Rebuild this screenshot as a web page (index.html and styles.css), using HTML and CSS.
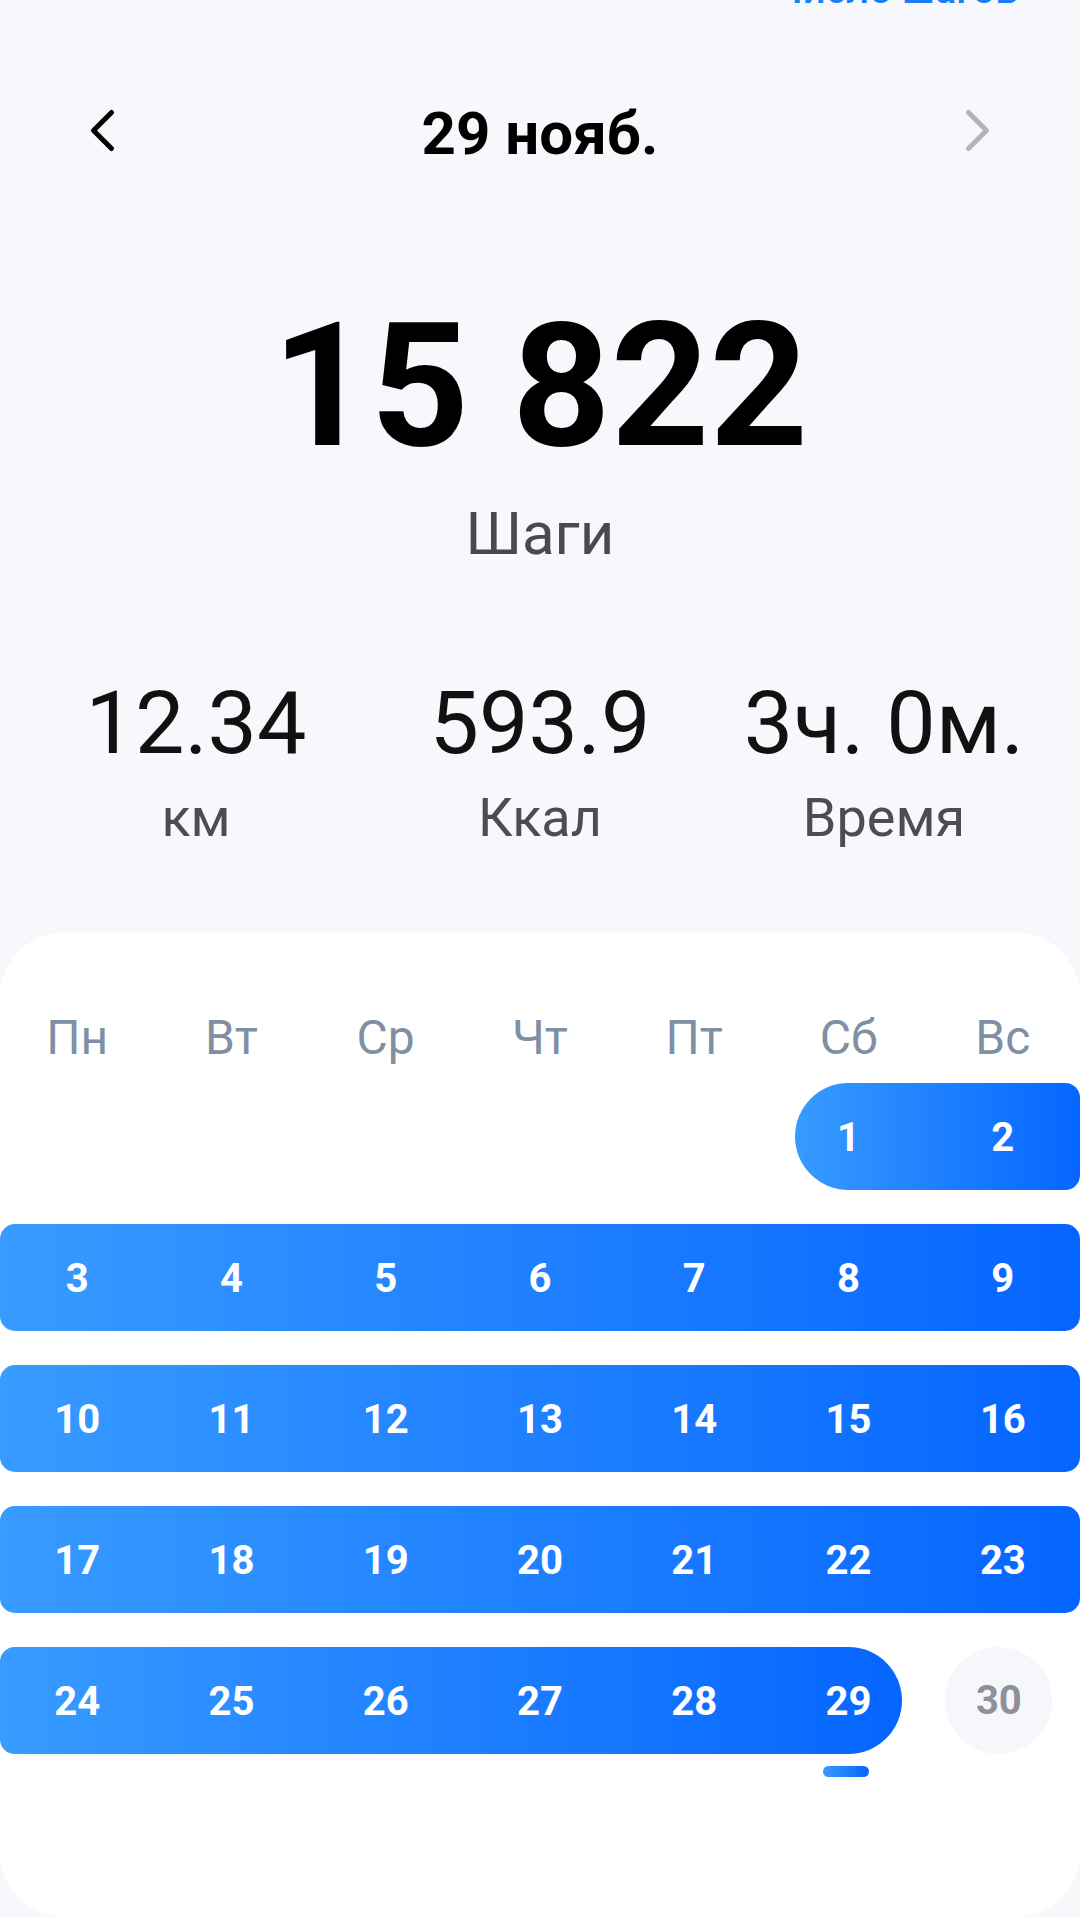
FILE: index.html
```html
<!DOCTYPE html>
<html lang="ru">
<head>
    <meta charset="UTF-8">
    <meta name="viewport" content="width=device-width, initial-scale=1.0">
    <title>Шаги</title>
    <link rel="stylesheet" href="styles.css">
</head>
<body>
    <div class="top-link"><span>Число шагов</span></div>

    <div class="date-nav">
        <svg class="nav-arrow" viewBox="0 0 32 50" width="32" height="50">
            <path d="M25.5 6.5 L7.5 24.5 L25.5 42.5" fill="none" stroke="#000" stroke-width="5" stroke-linecap="round" stroke-linejoin="round"/>
        </svg>
        <div class="date-title">29 нояб.</div>
        <svg class="nav-arrow" viewBox="0 0 32 50" width="32" height="50">
            <path d="M6.5 6.5 L24.5 24.5 L6.5 42.5" fill="none" stroke="#b3b3b8" stroke-width="5" stroke-linecap="round" stroke-linejoin="round"/>
        </svg>
    </div>

    <div class="steps-total">15 822</div>
    <div class="steps-label">Шаги</div>

    <div class="stats">
        <div class="stat">
            <div class="stat-value">12.34</div>
            <div class="stat-label">км</div>
        </div>
        <div class="stat">
            <div class="stat-value">593.9</div>
            <div class="stat-label">Ккал</div>
        </div>
        <div class="stat">
            <div class="stat-value">3ч. 0м.</div>
            <div class="stat-label">Время</div>
        </div>
    </div>

    <div class="calendar">
        <div class="weekdays">
            <div>Пн</div><div>Вт</div><div>Ср</div><div>Чт</div><div>Пт</div><div>Сб</div><div>Вс</div>
        </div>

        <div class="weeks">
            <div class="week">
                <div class="day"></div><div class="day"></div><div class="day"></div><div class="day"></div><div class="day"></div>
                <div class="range round-start">
                    <div class="day">1</div><div class="day">2</div>
                </div>
            </div>
            <div class="week">
                <div class="range">
                    <div class="day">3</div><div class="day">4</div><div class="day">5</div><div class="day">6</div><div class="day">7</div><div class="day">8</div><div class="day">9</div>
                </div>
            </div>
            <div class="week">
                <div class="range">
                    <div class="day">10</div><div class="day">11</div><div class="day">12</div><div class="day">13</div><div class="day">14</div><div class="day">15</div><div class="day">16</div>
                </div>
            </div>
            <div class="week">
                <div class="range">
                    <div class="day">17</div><div class="day">18</div><div class="day">19</div><div class="day">20</div><div class="day">21</div><div class="day">22</div><div class="day">23</div>
                </div>
            </div>
            <div class="week">
                <div class="range round-end">
                    <div class="day">24</div><div class="day">25</div><div class="day">26</div><div class="day">27</div><div class="day">28</div><div class="day">29</div>
                </div>
                <div class="day"><span class="future">30</span></div>
            </div>
        </div>

        <div class="marks">
            <div class="mark"></div>
        </div>
    </div>
</body>
</html>
```

FILE: styles.css
```css
:root {
    --cell: calc(1080px / 7);
    --inset: calc((1080px / 7 - 107px) / 2);
}
body {
    margin: 0;
    width: 1080px;
    height: 1917px;
    overflow: hidden;
    background: #f7f8fc;
    font-family: Roboto, "Noto Sans", sans-serif;
    color: #000;
}
.top-link {
    height: 4px;
    overflow: hidden;
    text-align: right;
    padding-right: 62px;
}
.top-link span {
    display: block;
    margin-top: -30px;
    font-size: 40px;
    line-height: 1;
    font-weight: 500;
    color: #1b7ef3;
}
.date-nav {
    margin-top: 80px;
    height: 100px;
    padding: 0 86px;
    display: flex;
    align-items: center;
    justify-content: space-between;
}
.nav-arrow {
    display: block;
    margin-bottom: 6px;
}
.date-title {
    font-size: 60px;
    font-weight: 700;
    line-height: 100px;
}
.steps-total {
    margin-top: 116px;
    font-size: 172px;
    font-weight: 700;
    line-height: 1;
    text-align: center;
}
.steps-label {
    margin-top: 32px;
    font-size: 60px;
    line-height: 1;
    text-align: center;
    color: #4a4a4e;
}
.stats {
    margin-top: 115px;
    padding: 0 24px;
    display: grid;
    grid-template-columns: repeat(3, 1fr);
    text-align: center;
}
.stat-value {
    font-size: 88px;
    line-height: 1;
    color: #111;
}
.stat-label {
    margin-top: 24px;
    font-size: 54px;
    line-height: 1;
    color: #4d4d50;
}
.calendar {
    margin-top: 87px;
    height: 985px;
    box-sizing: border-box;
    padding-top: 82px;
    background: #fff;
    border-radius: 65px;
}
.weekdays {
    display: flex;
    font-size: 48px;
    line-height: 1;
    color: #8090a4;
    margin-bottom: 21px;
}
.weekdays div {
    width: var(--cell);
    text-align: center;
}
.weeks {
    display: flex;
    flex-direction: column;
    gap: 34px;
}
.week {
    display: flex;
    height: 107px;
}
.range {
    display: flex;
    flex: 1;
    background: linear-gradient(90deg, #389bff, #0565ff);
    border-radius: 15px;
}
.range.round-start {
    margin-left: var(--inset);
    border-radius: 54px 15px 15px 54px;
}
.range.round-start .day:first-child {
    margin-left: calc(0px - var(--inset));
}
.range.round-end {
    flex: 0 0 auto;
    margin-right: var(--inset);
    border-radius: 15px 54px 54px 15px;
}
.range.round-end .day:last-child {
    margin-right: calc(0px - var(--inset));
}
.day {
    flex: 0 0 var(--cell);
    width: var(--cell);
    height: 107px;
    display: flex;
    align-items: center;
    justify-content: center;
    font-size: 40px;
    font-weight: 700;
    color: #fff;
    padding-top: 2px;
    box-sizing: border-box;
}
.future {
    width: 107px;
    height: 107px;
    border-radius: 50%;
    background: #f6f7fa;
    color: #8e9198;
    display: flex;
    align-items: center;
    justify-content: center;
    margin-top: -2px;
    margin-left: -8px;
}
.marks {
    display: flex;
    margin-top: 12px;
    padding-left: calc(var(--cell) * 5);
}
.mark {
    width: 46px;
    height: 11px;
    margin-left: calc((1080px / 7 - 46px) / 2 - 3px);
    border-radius: 6px;
    background: linear-gradient(90deg, #389bff, #0565ff);
}
```
